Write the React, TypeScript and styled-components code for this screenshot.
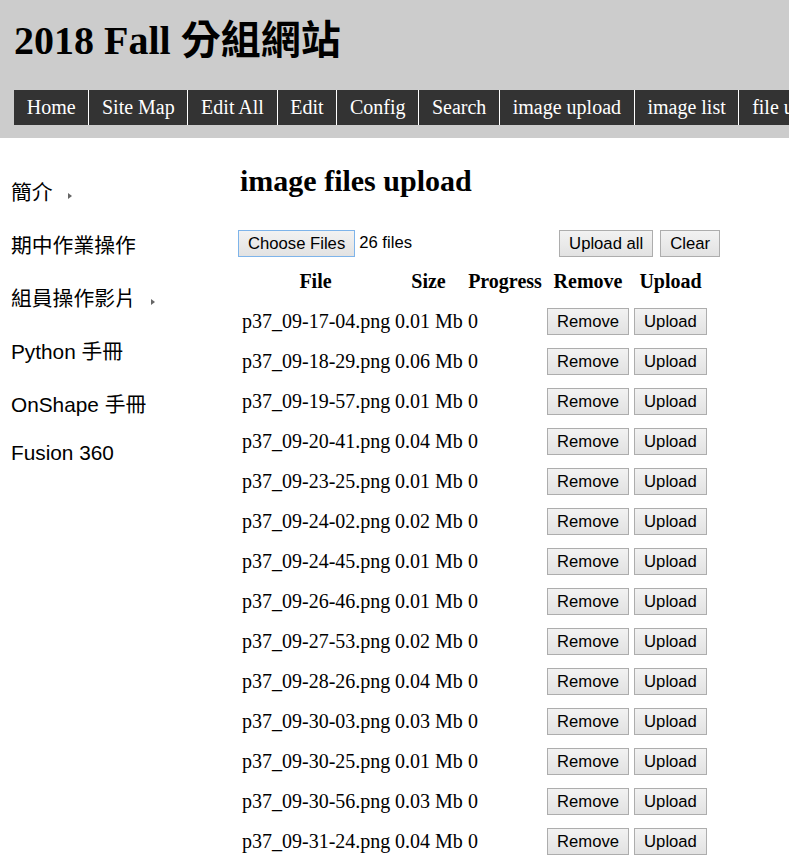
import React from "react";
import styled, { createGlobalStyle } from "styled-components";

const Global = createGlobalStyle`
  html, body { margin: 0; padding: 0; overflow: hidden; background: #fff; }
  body { font-family: "Liberation Serif", "Noto Sans CJK TC", serif; color: #000; }
`;

const Header = styled.header`
  background: #cccccc;
  padding: 18px 0 13px 14px;
  overflow: hidden;
`;

const Title = styled.h1`
  margin: 0;
  font-family: "Liberation Serif", "Noto Sans CJK TC", serif;
  font-size: 40px;
  line-height: 46px;
  font-weight: bold;
  white-space: nowrap;
`;

const Nav = styled.nav`
  display: flex;
  margin-top: 26px;
  height: 35px;
  white-space: nowrap;
`;

const NavItem = styled.a`
  display: block;
  flex: none;
  background: #333333;
  color: #ffffff;
  font-family: "Liberation Serif", serif;
  font-size: 20px;
  line-height: 35px;
  padding: 0 12.7px;
  border-right: 1px solid #ffffff;
  text-decoration: none;
`;

const Body = styled.div`
  display: flex;
  align-items: flex-start;
`;

const Sidebar = styled.ul`
  list-style: none;
  margin: 0;
  padding: 26px 0 0 11px;
  width: 228px;
  flex: none;
`;

const SideItem = styled.li<{ $short?: boolean }>`
  font-family: "Liberation Sans", "Noto Sans CJK TC", sans-serif;
  font-size: 20.8px;
  height: ${(p) => (p.$short ? 47 : 53)}px;
  white-space: nowrap;
  display: flex;
  align-items: center;
`;

const Caret = styled.span`
  display: inline-block;
  margin-left: 15px;
  margin-top: 10px;
  width: 0;
  height: 0;
  border-left: 4px solid #666;
  border-top: 3.5px solid transparent;
  border-bottom: 3.5px solid transparent;
`;

const Main = styled.main`
  padding-top: 25px;
  flex: 1;
`;

const H2 = styled.h2`
  margin: 0 0 30px 1px;
  font-size: 30px;
  line-height: 36px;
  font-weight: bold;
`;

const Toolbar = styled.div`
  display: flex;
  align-items: center;
  width: 481px;
  height: 28px;
`;

const FileGroup = styled.div`
  display: flex;
  align-items: center;
  flex: 1;
  margin-left: -1px;
`;

const FilesText = styled.span`
  font-family: "Liberation Sans", sans-serif;
  font-size: 16.67px;
  margin-left: 4px;
`;

const Button = styled.button<{ $focused?: boolean }>`
  font-family: "Liberation Sans", sans-serif;
  font-size: 16.67px;
  height: 27px;
  padding: 0 9px;
  border: 1px solid ${(p) => (p.$focused ? "#7eb4ea" : "#adadad")};
  border-radius: 0;
  background: linear-gradient(#f2f2f2, #e2e2e2);
  color: #000;
  margin: 0;
  line-height: 25px;
  white-space: nowrap;
`;

const ButtonGap = styled.span`
  display: inline-block;
  width: 7px;
`;

const Table = styled.table`
  margin-top: 4px;
  border-collapse: collapse;
  table-layout: fixed;
  width: 471px;
  font-size: 20px;
`;

const Th = styled.th<{ $w: number }>`
  width: ${(p) => p.$w}px;
  height: 40px;
  padding: 0;
  text-align: center;
  font-weight: bold;
  white-space: nowrap;
`;

const Td = styled.td`
  height: 40px;
  padding: 0 0 0 3px;
  text-align: left;
  vertical-align: middle;
  white-space: nowrap;
`;

const BtnTd = styled.td`
  height: 40px;
  padding: 0;
  text-align: center;
  vertical-align: middle;
`;

const navItems = [
  "Home",
  "Site Map",
  "Edit All",
  "Edit",
  "Config",
  "Search",
  "image upload",
  "image list",
  "file upload",
  "file list",
  "logout",
];

const sideItems: { label: string; caret?: boolean; short?: boolean }[] = [
  { label: "簡介", caret: true },
  { label: "期中作業操作" },
  { label: "組員操作影片", caret: true },
  { label: "Python 手冊" },
  { label: "OnShape 手冊" },
  { label: "Fusion 360", short: true },
];

const files: [string, string][] = [
  ["p37_09-17-04.png", "0.01"],
  ["p37_09-18-29.png", "0.06"],
  ["p37_09-19-57.png", "0.01"],
  ["p37_09-20-41.png", "0.04"],
  ["p37_09-23-25.png", "0.01"],
  ["p37_09-24-02.png", "0.02"],
  ["p37_09-24-45.png", "0.01"],
  ["p37_09-26-46.png", "0.01"],
  ["p37_09-27-53.png", "0.02"],
  ["p37_09-28-26.png", "0.04"],
  ["p37_09-30-03.png", "0.03"],
  ["p37_09-30-25.png", "0.01"],
  ["p37_09-30-56.png", "0.03"],
  ["p37_09-31-24.png", "0.04"],
];

export default function App() {
  return (
    <>
      <Global />
      <Header>
        <Title>2018 Fall 分組網站</Title>
        <Nav>
          {navItems.map((n) => (
            <NavItem key={n} href="#">
              {n}
            </NavItem>
          ))}
        </Nav>
      </Header>
      <Body>
        <Sidebar>
          {sideItems.map((s) => (
            <SideItem key={s.label} $short={s.short}>
              {s.label}
              {s.caret && <Caret />}
            </SideItem>
          ))}
        </Sidebar>
        <Main>
          <H2>image files upload</H2>
          <Toolbar>
            <FileGroup>
              <Button $focused>Choose Files</Button>
              <FilesText>26 files</FilesText>
            </FileGroup>
            <Button>Upload all</Button>
            <ButtonGap />
            <Button>Clear</Button>
          </Toolbar>
          <Table>
            <thead>
              <tr>
                <Th $w={153}>File</Th>
                <Th $w={73}>Size</Th>
                <Th $w={80}>Progress</Th>
                <Th $w={86}>Remove</Th>
                <Th $w={79}>Upload</Th>
              </tr>
            </thead>
            <tbody>
              {files.map(([name, size]) => (
                <tr key={name}>
                  <Td>{name}</Td>
                  <Td>{size} Mb</Td>
                  <Td>0</Td>
                  <BtnTd>
                    <Button>Remove</Button>
                  </BtnTd>
                  <BtnTd>
                    <Button>Upload</Button>
                  </BtnTd>
                </tr>
              ))}
            </tbody>
          </Table>
        </Main>
      </Body>
    </>
  );
}
